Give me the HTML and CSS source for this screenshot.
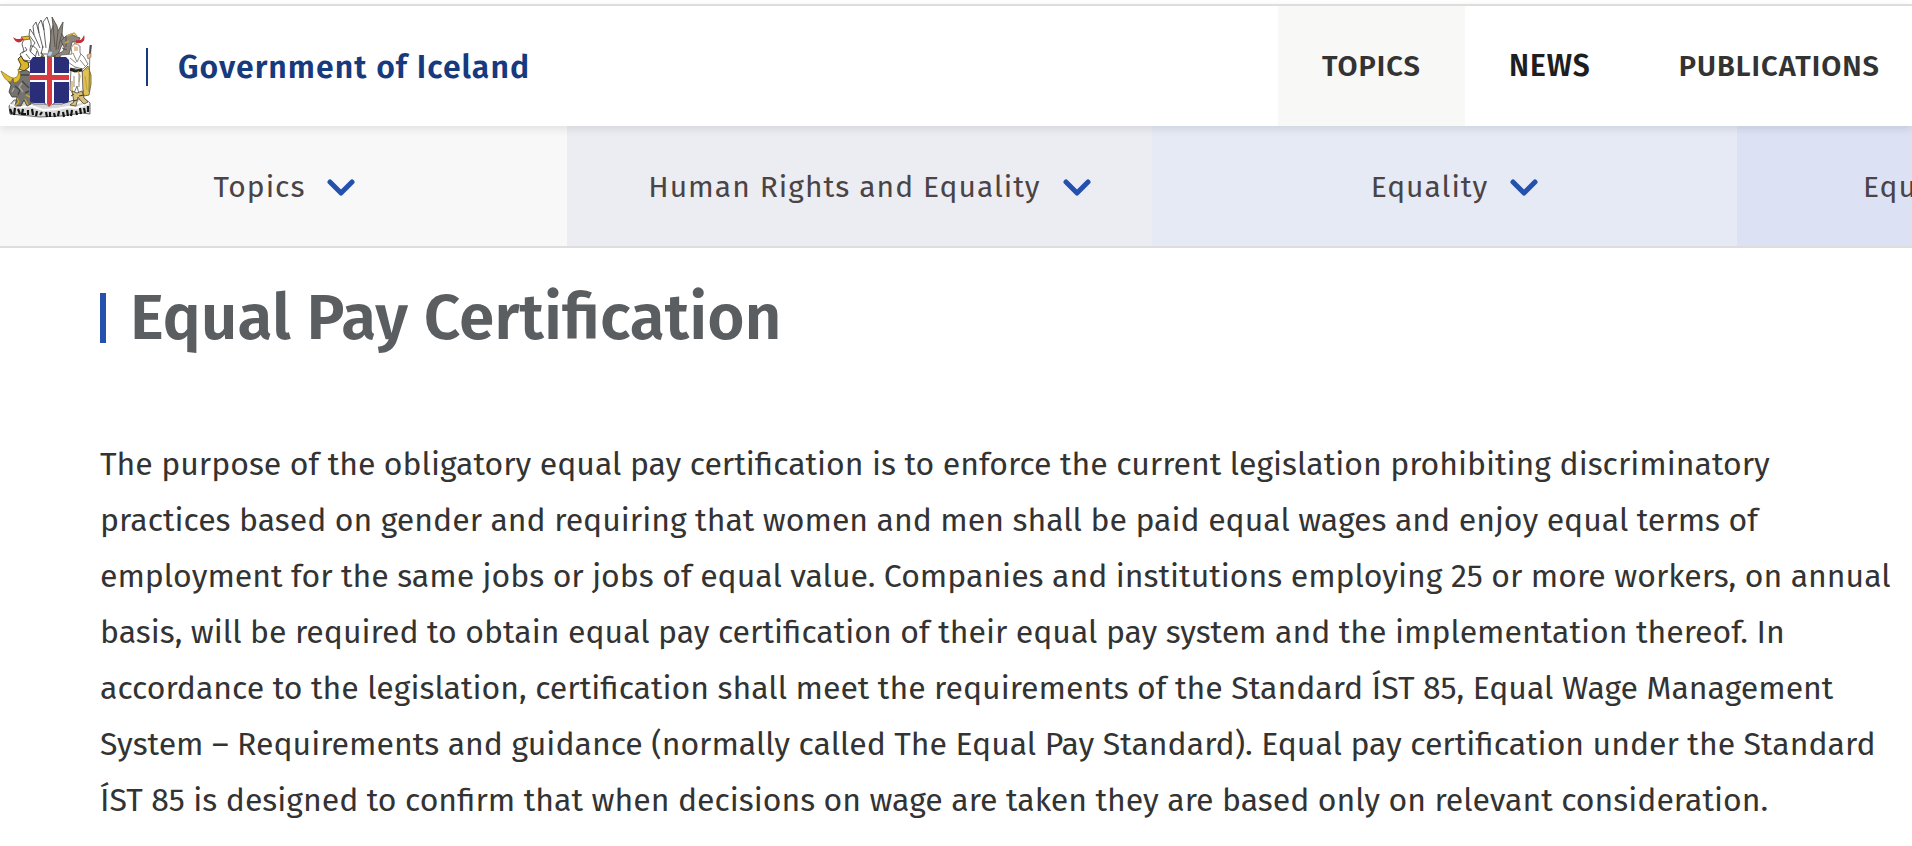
FILE: index.html
```html
<!DOCTYPE html>
<html lang="en">
<head>
    <meta charset="UTF-8">
    <meta name="viewport" content="width=device-width, initial-scale=1.0">
    <title>Equal Pay Certification</title>
    <link rel="stylesheet" href="styles.css">
</head>
<body>
    <header class="header">
        <a class="brand" href="#">
            <svg class="emblem" viewBox="0 -2 96 106" aria-hidden="true">
                <!-- eagle, left -->
                <g fill="#fff" stroke="#3c3c3c" stroke-width="0.8" stroke-linejoin="round">
                    <path d="M31 41 C29 34 33 30 35 27 L29 19 L30 13 L34 19 L33 10 L36 6 L39 17 L38 9 L41 4 L44 14 L43 6 L47 1 L50 10 L51 22 L49 34 L47 42 L40 45 Z"/>
                    <path d="M22 28 C24 20 31 21 31 26 C32 32 27 34 33 38 L39 44 L30 45 L23 44 L20 38 L24 35 Z"/>
                    <path d="M34 19 L40 32 M39 17 L43 32 M44 14 L46 32 M30 30 C35 29 38 34 39 40 M41 36 L45 42 M26 38 L30 43" fill="none"/>
                    <path d="M22 37 L27 34 L25 31 M21 43 L29 47 L34 43 M37 35 L35 42 M43 30 L41 38 L47 38" fill="none"/>
                </g>
                <path d="M21 21 L29 20 L30 23 L24 24 Z" fill="#e6b925" stroke="#5a4a10" stroke-width="0.7"/>
                <path d="M23 24 C20 28 15 27 13 21 C17 24 19 23 23 22 Z" fill="#c42e35"/>
                <path d="M18 43 L21 40 L24 45 L28 46 L29 51 L24 55 L19 53 L21 49 Z" fill="#dcb52a" stroke="#4c4216" stroke-width="1"/>
                <!-- dragon, right -->
                <g fill="#8b857d" stroke="#4d4843" stroke-width="0.8" stroke-linejoin="round">
                    <path d="M50 34 L51 15 L53 10 L52 1 L57 10 L58 15 L63 6 L62 18 L65 24 L61 31 L58 39 L52 43 L48 41 Z"/>
                    <path d="M57 38 C60 36 64 37 64 31 L61 25 L66 20 L71 18 L75 20 L80 22 L78 26 L72 26 L71 31 L69 38 L62 44 L50 44 Z"/>
                    <path d="M53 9 L55 31 M58 15 L56 34 M62 17 L58 33 M66 21 L66 31 M62 32 L67 34" fill="none"/>
                </g>
                <path d="M67 20 L74 17 L77 20 M65 27 L69 25" fill="none" stroke="#caa33a" stroke-width="1.4"/>
                <path d="M76 24 C80 25 82 24 84 19 C86 25 82 28 76 27 Z" fill="#c42e35"/>
                <path d="M49 35 L53 36 L51 40 L47 40 Z" fill="#b9d2e3" stroke="#69757d" stroke-width="0.5"/>
                <path d="M40 43 L42 40 L44 43 L47 42 M52 44 L54 40 L57 43 L60 41 L62 44" fill="none" stroke="#6d5a1b" stroke-width="1.6"/>
                <!-- pedestal -->
                <path d="M9 90 L14 84 L24 84 L34 88 L62 88 L74 84 L84 82 L90 87 L90 98 L82 97 L61 100 L40 101 L10 98 Z" fill="#d8d8d6" stroke="#454545" stroke-width="0.8"/>
                <path d="M10 89 L20 91 L31 90 L43 94 L57 93 L68 91 L77 92 L89 87 M72 88 L81 86 M14 87 L22 87" fill="none" stroke="#fff" stroke-width="2"/>
                <path d="M10 93 L12 98 M15 92 L14 99 M18 93 L20 98 M23 93 L22 98 L26 98 M28 94 L28 99 M32 93 L33 99 M37 95 L36 100 M42 96 L40 99 M46 96 L47 101 M50 96 L50 101 M54 97 L55 101 M59 95 L58 100 M63 96 L64 101 M67 94 L68 100 M72 94 L71 100 M76 95 L77 99 M80 92 L81 98 M84 92 L85 97 M88 90 L88 96" fill="none" stroke="#151515" stroke-width="2.2"/>
                <!-- bull -->
                <path d="M19 56 L26 54 L31 57 L31 88 L27 90 L24 84 L21 90 L15 90 L17 81 L12 81 L9 76 L11 69 L8 65 L14 63 L18 62 Z" fill="#74736f" stroke="#383836" stroke-width="0.8"/>
                <path d="M20 59 L29 59 M22 65 L29 72 M25 77 L29 75 M15 70 L20 74 L18 79" fill="none" stroke="#454542" stroke-width="1.4"/>
                <path d="M22 67 L19 71 L23 76 M12 76 L14 72" fill="none" stroke="#a8a7a2" stroke-width="1.4"/>
                <path d="M11 66 C7 66 3 61 1 55 C6 58 9 61 13 62 Z" fill="#e4bd2c" stroke="#73601b" stroke-width="0.6"/>
                <path d="M13 62 C18 62 19 58 18 53 C23 60 20 66 14 67 Z" fill="#e4bd2c" stroke="#73601b" stroke-width="0.6"/>
                <path d="M17 82 L19 86 L15 90 M25 83 L28 89 M26 79 L30 81" fill="none" stroke="#c8a22d" stroke-width="1.4"/>
                <!-- giant with staff -->
                <path d="M82 56 L88 50 L91 59 L91 68 L89 79 L84 80 L82 70 Z" fill="#e0c354" stroke="#5c5332" stroke-width="0.8"/>
                <path d="M71 53 L82 51 L83 76 L79 78 L77 70 L74 77 L70 74 Z" fill="#fff" stroke="#57534c" stroke-width="0.8"/>
                <path d="M72 38 L71 31 L75 27 L80 30 L80 37 L84 41 L88 48 L83 53 L75 51 L68 46 L59 43 L61 39 Z" fill="#fff" stroke="#67635d" stroke-width="0.8"/>
                <path d="M74 30 L78 31 L78 35 L74 35 Z" fill="#e5c29f"/>
                <path d="M72 31 C73 27 79 27 80 32" fill="none" stroke="#bcb7aa" stroke-width="1.4"/>
                <path d="M73 37 L77 46 L81 38 M70 42 L76 47 M80 44 L85 50 M74 60 L74 71 M79 58 L79 71" fill="none" stroke="#8b8983" stroke-width="1"/>
                <path d="M70 53 L75 55 L82 54" fill="none" stroke="#272622" stroke-width="3"/>
                <path d="M78 55 L80 60 L79 66 M72 65 L72 77 M85 60 L87 74 M89 51 L86 54" fill="none" stroke="#c5a13b" stroke-width="1.2"/>
                <path d="M72 75 L74 86 L70 89 L76 90 L78 81 L81 85 L84 88 L88 86 L84 82 L82 75 L77 77 Z" fill="#d9be78" stroke="#4e4635" stroke-width="0.8"/>
                <path d="M71 80 L74 78 M73 85 L77 84 M79 80 L84 79" stroke="#3b352b" stroke-width="1"/>
                <path d="M90 29 L89 76" stroke="#6a6050" stroke-width="0.8"/>
                <path d="M91 29 L90 38" stroke="#4c4c4c" stroke-width="1.8"/>
                <path d="M87 39 L91 37 L91 41 L88 43 Z" fill="#e5bd96" stroke="#80624a" stroke-width="0.6"/>
                <!-- shield -->
                <path d="M30 45 L33 41 L66 41 L69 44 L69 84 Q69 87 65 87 L55 87 L49 91 L44 87 L34 87 Q30 87 30 84 Z" fill="#2a2e78"/>
                <path d="M45 41 H54 V57 H69 V66 H54 V87 L49 91 L45 87 V66 H30 V57 H45 Z" fill="#fff"/>
                <path d="M47 41 H52 V59 H69 V64 H52 V88 L49 91 L47 88 V64 H30 V59 H47 Z" fill="#d93b40"/>
            </svg>
            <span class="brand-name">Government of Iceland</span>
        </a>
        <nav class="main-nav" aria-label="Main">
            <a class="active" href="#">TOPICS</a>
            <a class="current" href="#">NEWS</a>
            <a href="#">PUBLICATIONS</a>
        </nav>
    </header>

    <nav class="breadcrumbs" aria-label="Breadcrumbs">
        <button class="crumb" type="button">Topics
            <svg class="chevron" viewBox="0 0 28 20" aria-hidden="true"><path d="M3 5 L14 16 L25 5"/></svg>
        </button>
        <button class="crumb" type="button">Human Rights and Equality
            <svg class="chevron" viewBox="0 0 28 20" aria-hidden="true"><path d="M3 5 L14 16 L25 5"/></svg>
        </button>
        <button class="crumb" type="button">Equality
            <svg class="chevron" viewBox="0 0 28 20" aria-hidden="true"><path d="M3 5 L14 16 L25 5"/></svg>
        </button>
        <button class="crumb" type="button">Equ</button>
    </nav>

    <main class="content">
        <h1>Equal Pay Certification</h1>
        <p>The purpose of the obligatory equal pay certification is to enforce the current legislation prohibiting discriminatory practices based on gender and requiring that women and men shall be paid equal wages and enjoy equal terms of employment for the same jobs or jobs of equal value. Companies and institutions employing 25 or more workers, on annual basis, will be required to obtain equal pay certification of their equal pay system and the implementation thereof. In accordance to the legislation, certification shall meet the requirements of the Standard ÍST 85, Equal Wage Management System – Requirements and guidance (normally called The Equal Pay Standard). Equal pay certification under the Standard ÍST 85 is designed to confirm that when decisions on wage are taken they are based only on relevant consideration.</p>
    </main>
</body>
</html>
```
FILE: styles.css
```css
* {
    box-sizing: border-box;
}

body {
    margin: 0;
    padding-top: 4px;
    font-family: "Fira Sans", "Noto Sans", sans-serif;
    font-size: 32px;
    color: #333;
    background: #fff;
    overflow-x: hidden;
}

a {
    color: inherit;
    text-decoration: none;
}

.header {
    display: flex;
    justify-content: space-between;
    min-height: 122px;
    border-top: 2px solid #ddd;
    background: #fff;
    box-shadow: 0 3px 8px rgba(0, 0, 0, 0.1);
    position: relative;
    z-index: 1;
}

.brand {
    display: flex;
    align-items: center;
    gap: 50px;
    padding-top: 2px;
    color: #163a7d;
}

.emblem {
    width: 96px;
    height: 106px;
}

.brand-name {
    padding-left: 30px;
    border-left: 2px solid #163a7d;
    font-weight: 600;
    line-height: 38px;
    letter-spacing: 1px;
}

.main-nav {
    display: flex;
    font-size: 29px;
    font-weight: 600;
    letter-spacing: 1px;
}

.main-nav a {
    display: flex;
    align-items: center;
    padding: 0 44px;
}

.main-nav a:last-child {
    padding-right: 32px;
}

.main-nav .active {
    background: #f8f8f6;
}

.main-nav .current {
    color: #1e1e1e;
    font-size: 30px;
}

.breadcrumbs {
    display: flex;
    border-bottom: 2px solid #ddd;
    overflow: hidden;
}

.crumb {
    display: flex;
    flex: 0 0 30.6%;
    justify-content: center;
    align-items: center;
    gap: 22px;
    height: 120px;
    padding: 2px 0 0 20px;
    border: 0;
    background: #ecedf3;
    color: #4a4446;
    font: inherit;
    font-size: 30px;
    letter-spacing: 1px;
    cursor: pointer;
}

.crumb:first-child {
    flex-basis: 29.65%;
    padding-left: 2px;
    background: #f8f8f8;
}

.crumb:nth-child(3) {
    background: #e5eaf5;
}

.crumb:nth-child(4) {
    justify-content: flex-start;
    padding-left: 126px;
    background: #dce2f4;
}

.chevron {
    width: 28px;
    height: 20px;
    fill: none;
    stroke: #2450ae;
    stroke-width: 5;
    stroke-linecap: round;
    stroke-linejoin: round;
}

.content {
    padding: 28px 20px 0 100px;
}

h1 {
    display: flex;
    align-items: center;
    gap: 24px;
    margin: 0 0 76px;
    color: #5b5e61;
    font-size: 64px;
    font-weight: 600;
    line-height: 84px;
}

h1::before {
    content: "";
    width: 6px;
    height: 50px;
    background: #2450ae;
}

p {
    margin: 0;
    line-height: 56px;
}
```
